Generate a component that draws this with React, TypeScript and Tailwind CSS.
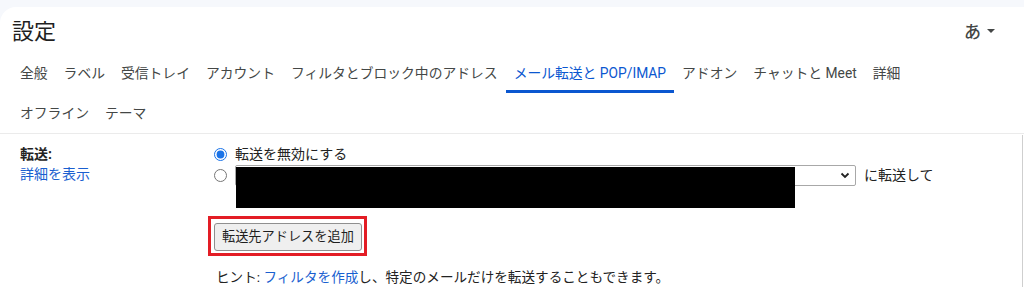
import React from 'react';

const tabsRow1 = [
  '全般',
  'ラベル',
  '受信トレイ',
  'アカウント',
  'フィルタとブロック中のアドレス',
  'メール転送と POP/IMAP',
  'アドオン',
  'チャットと Meet',
  '詳細',
];
const tabsRow2 = ['オフライン', 'テーマ'];

const font = "font-['Roboto','Noto_Sans_CJK_JP',sans-serif]";

const Tab: React.FC<{ label: string; active?: boolean }> = ({ label, active }) => (
  <div
    className={`relative flex h-[40px] items-center px-2 text-[13.8px] ${
      active ? 'text-[#0b57d0]' : 'text-[#444746]'
    }`}
  >
    {label}
    {active && <span className="absolute bottom-0 left-0 right-0 h-[3px] bg-[#0b57d0]" />}
  </div>
);

export default function App() {
  return (
    <div className={`min-h-[290px] w-[1024px] bg-[#f6f8fc] pt-[7px] ${font}`}>
      <div className="h-[283px] overflow-hidden rounded-tl-[16px] bg-white">
        {/* header */}
        <div className="flex items-center justify-between pl-3 pr-[28px] pt-[11px]">
          <h1 className="text-[22px] leading-[28px] text-[#1f1f1f]">設定</h1>
          <div className="flex items-center gap-[5px] text-[#444746]">
            <span className="text-[17px] font-medium leading-[28px]">あ</span>
            <svg width="10" height="6" viewBox="0 0 10 6" className="mb-[3px]">
              <path d="M1 1h8L5 5z" fill="#444746" />
            </svg>
          </div>
        </div>

        {/* tabs */}
        <div className="mt-[7px] px-3">
          <div className="flex">
            {tabsRow1.map((t) => (
              <Tab key={t} label={t} active={t === 'メール転送と POP/IMAP'} />
            ))}
          </div>
          <div className="flex">
            {tabsRow2.map((t) => (
              <Tab key={t} label={t} />
            ))}
          </div>
        </div>

        {/* content */}
        <div className="flex border-t border-[#ebebeb]">
          <div className="flex flex-1 pl-5 pt-[10px] text-[14px] text-[#222]">
            <div className="w-[194px] leading-[20px]">
              <div className="font-bold">転送:</div>
              <div className="text-[#1a5fd0]">詳細を表示</div>
            </div>
            <div className="flex flex-col">
              <label className="flex h-[20px] items-center gap-[8px]">
                <input type="radio" name="fw" defaultChecked className="m-0 h-[13px] w-[13px] accent-[#1a73e8]" />
                <span>転送を無効にする</span>
              </label>
              <div className="relative mt-[1px] flex h-[21px] items-center gap-[8px]">
                <input type="radio" name="fw" className="m-0 h-[13px] w-[13px]" />
                <div className="flex h-[21px] w-[621px] items-center justify-end rounded-[2px] border border-[#a8a8a8] bg-white pr-[5px]">
                  <svg width="10" height="7" viewBox="0 0 10 7">
                    <path d="M1.5 1.5l3.5 3.5 3.5-3.5" stroke="#222" strokeWidth="1.8" fill="none" />
                  </svg>
                </div>
                <span>に転送して</span>
                <div className="absolute left-[22px] top-[2px] h-[41px] w-[559px] bg-black" />
              </div>

              <div className="ml-[-6px] mt-[30px] w-fit border-[3px] border-[#e31d25] pb-[2px] pl-[3px] pr-[2px] pt-[4px]">
                <button className="h-[28px] rounded-[3px] border border-[#8f8f8f] bg-[#efefef] px-[7px] text-[13.2px] text-[#1f1f1f]">
                  転送先アドレスを追加
                </button>
              </div>

              <div className="mt-[11px] pl-[2px] text-[13.6px] leading-[20px] text-[#222]">
                ヒント: <span className="text-[#1a5fd0]">フィルタを作成</span>し、特定のメールだけを転送することもできます。
              </div>
            </div>
          </div>
          <div className="mr-[1px] mt-[1px] w-px bg-[#cfcfcf]" />
        </div>
      </div>
    </div>
  );
}
